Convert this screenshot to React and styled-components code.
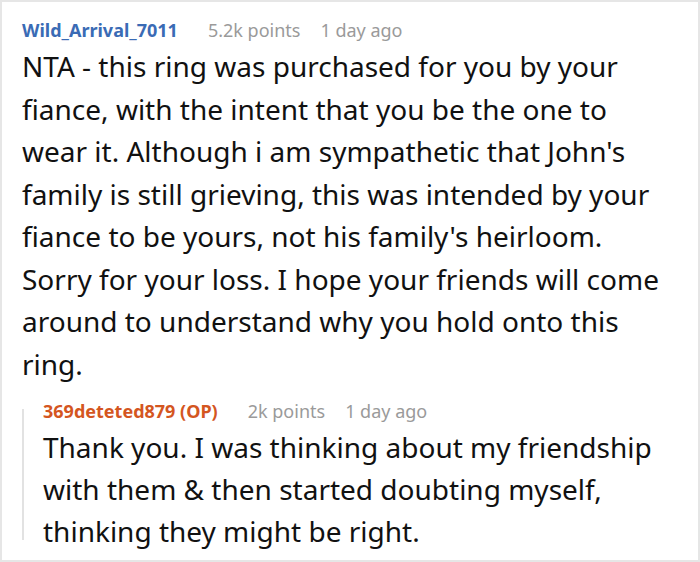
import styled, { createGlobalStyle } from "styled-components"

const Global = createGlobalStyle`
  html, body {
    margin: 0;
    padding: 0;
    background: #fff;
  }
  body {
    font-family: "Noto Sans", "Open Sans", sans-serif;
  }
`

const Frame = styled.div`
  box-sizing: border-box;
  width: 700px;
  height: 562px;
  border: 2px solid #e6e6e6;
  padding: 14px 20px 0 20px;
  overflow: hidden;
`

const Comment = styled.div`
  display: flex;
  flex-direction: column;
`

const Meta = styled.div`
  display: flex;
  align-items: baseline;
  gap: 20px;
  font-size: 18px;
  line-height: 28px;
  color: #9a9a9a;
`

const User = styled.span`
  font-weight: 700;
  color: ${props => props.color};
  margin-right: 10px;
`

const Body = styled.p`
  margin: 1px 0 0;
  font-size: 28px;
  line-height: 42.5px;
  color: #111;
`

const Reply = styled.div`
  position: relative;
  margin: 12px 0 0 0;
  padding-left: 21px;

  &::before {
    content: "";
    position: absolute;
    left: 0;
    top: 12px;
    bottom: 12px;
    width: 2px;
    background: #e2e2e2;
  }
`

const ReplyBody = styled(Body)`
  line-height: 42px;
`

const App = () => {
  return (
    <>
      <Global />
      <Frame>
        <Comment>
          <Meta>
            <User color="#3a6bb5">Wild_Arrival_7011</User>
            <span>5.2k points</span>
            <span>1 day ago</span>
          </Meta>
          <Body>
            NTA - this ring was purchased for you by your fiance, with the intent that you be the one to wear it. Although i am sympathetic that John's family is still grieving, this was intended by your fiance to be yours, not his family's heirloom. Sorry for your loss. I hope your friends will come around to understand why you hold onto this ring.
          </Body>
          <Reply>
            <Meta>
              <User color="#d4561f">369deteted879 (OP)</User>
              <span>2k points</span>
              <span>1 day ago</span>
            </Meta>
            <ReplyBody>
              Thank you. I was thinking about my friendship with them &amp; then started doubting myself, thinking they might be right.
            </ReplyBody>
          </Reply>
        </Comment>
      </Frame>
    </>
  )
}

export default App
